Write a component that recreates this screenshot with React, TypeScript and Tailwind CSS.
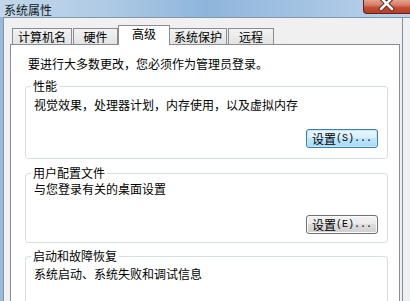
import React from "react";

function Button({ label, hotkey, focused }: { label: string; hotkey: string; focused?: boolean }) {
  return (
    <div
      className={`w-[72px] h-[19px] rounded-[3px] border flex items-center justify-center ${
        focused
          ? "border-[#3c7fb1] bg-[linear-gradient(#eaf6fd_0%,#d9f0fc_45%,#bee6fd_50%,#a7d9f5_100%)] shadow-[inset_0_0_0_1px_#c4e8fb]"
          : "border-[#707070] bg-[linear-gradient(#f2f2f2_0%,#ebebeb_45%,#dddddd_50%,#cfcfcf_100%)] shadow-[inset_0_0_0_1px_#fcfcfc]"
      }`}
    >
      <span>{label}</span>
      <span className="font-['Liberation_Mono',monospace] text-[10px]">({hotkey})...</span>
    </div>
  );
}

function GroupBox({
  title,
  text,
  children,
  textGap,
}: {
  title: string;
  text: string;
  children?: React.ReactNode;
  textGap: string;
}) {
  return (
    <fieldset className="w-[363px] border border-[#d5dfe5] rounded-[3px]">
      <legend className="ml-[5px] px-[2px]">{title}</legend>
      <div className={`pl-[8px] ${textGap}`}>{text}</div>
      {children}
    </fieldset>
  );
}

export default function App() {
  return (
    <div className="w-[410px] h-[301px] overflow-hidden flex flex-col bg-[#98b9dc] font-['Noto_Sans_CJK_SC',sans-serif] text-[12px] leading-[14px] text-black">
      {/* title bar */}
      <div className="h-[22px] flex items-start bg-[linear-gradient(90deg,#c4d7ea_0%,#b0cbe6_25%,#8fb5dc_50%,#a4c3e3_75%,#bcd4ec_100%)]">
        <span className="pl-[4px] pt-[3px] text-[#111a24]">系统属性</span>
        <div className="ml-auto w-[47px] h-[14px] rounded-bl-[4px] border-l border-b border-[#5e231b] bg-[linear-gradient(#e4a190_0%,#d77a64_40%,#c24a32_60%,#b8402a_100%)]">
          <svg width="46" height="13" viewBox="0 0 46 13">
            <path d="M17 -2 L28 9 M28 -2 L17 9" stroke="#5a1c14" strokeWidth="4.5" strokeLinecap="round" />
            <path d="M17 -2 L28 9 M28 -2 L17 9" stroke="#ffffff" strokeWidth="2.6" strokeLinecap="round" />
          </svg>
        </div>
      </div>

      {/* window body */}
      <div className="flex-1 ml-[3px] border-l border-t border-[#8496aa] bg-[#f0f0f0] flex">
        <div className="w-[396px] pl-[6px] pt-[7px] flex flex-col">
          {/* tabs */}
          <div className="h-[19px] flex items-end">
            <div className="ml-[2px] w-[60px] h-[16px] border border-b-0 border-[#898c95] bg-[linear-gradient(#f2f2f2,#e3e3e3)] flex items-center justify-center">计算机名</div>
            <div className="ml-[1px] w-[45px] h-[16px] border border-b-0 border-[#898c95] bg-[linear-gradient(#f2f2f2,#e3e3e3)] flex items-center justify-center">硬件</div>
            <div className="relative z-10 -mb-px w-[52px] h-[20px] border border-b-0 border-[#898c95] bg-white flex justify-center pt-[1px]">高级</div>
            <div className="w-[57px] h-[16px] border border-b-0 border-l-0 border-[#898c95] bg-[linear-gradient(#f2f2f2,#e3e3e3)] flex items-center justify-center">系统保护</div>
            <div className="ml-[1px] w-[46px] h-[16px] border border-b-0 border-[#898c95] bg-[linear-gradient(#f2f2f2,#e3e3e3)] flex items-center justify-center">远程</div>
          </div>

          {/* tab page */}
          <div className="flex-1 border border-[#898c95] bg-white pl-[14px] pt-[12px] flex flex-col">
            <div className="pl-[3px]">要进行大多数更改，您必须作为管理员登录。</div>

            <div className="mt-[8px]">
              <GroupBox title="性能" text="视觉效果，处理器计划，内存使用，以及虚拟内存" textGap="mt-[5px]">
                <div className="mt-[17px] pr-[9px] pb-[10px] flex justify-end">
                  <Button label="设置" hotkey="S" focused />
                </div>
              </GroupBox>
            </div>

            <div className="mt-[7px]">
              <GroupBox title="用户配置文件" text="与您登录有关的桌面设置" textGap="mt-[2px]">
                <div className="mt-[19px] pr-[9px] pb-[8px] flex justify-end">
                  <Button label="设置" hotkey="E" />
                </div>
              </GroupBox>
            </div>

            <div className="mt-[6px]">
              <GroupBox title="启动和故障恢复" text="系统启动、系统失败和调试信息" textGap="mt-[4px]">
                <div className="h-[40px]" />
              </GroupBox>
            </div>
          </div>
        </div>
        <div className="ml-[2px] w-px bg-[#7f93a8]" />
      </div>
    </div>
  );
}
